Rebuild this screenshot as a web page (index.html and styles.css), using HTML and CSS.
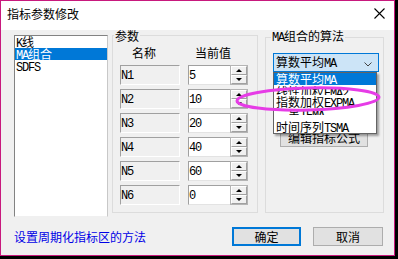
FILE: index.html
```html
<!DOCTYPE html>
<html>
<head>
<meta charset="utf-8">
<title>指标参数修改</title>
<link rel="stylesheet" href="styles.css">
</head>
<body>
<div class="win">
  <div class="titlebar">
    <span class="title">指标参数修改</span>
    <svg class="close" width="11" height="11" viewBox="0 0 11 11"><path d="M0.5 0.5L10.5 10.5M10.5 0.5L0.5 10.5" stroke="#000" stroke-width="1.1" fill="none"/></svg>
  </div>
  <div class="client">
    <div class="main">
      <ul class="listbox">
        <li><span class="l">K</span>线</li>
        <li class="sel"><span class="l">MA</span>组合</li>
        <li><span class="l">SDFS</span></li>
      </ul>
      <fieldset class="group params">
        <legend>参数</legend>
        <div class="hdr"><span class="h-name">名称</span><span class="h-val">当前值</span></div>
        <div class="rows">
          <div class="row"><div class="name"><span class="l">N1</span></div><div class="val"><span class="l">5</span></div><div class="spin"><span class="up"><i></i></span><span class="dn"><i></i></span></div></div>
          <div class="row"><div class="name"><span class="l">N2</span></div><div class="val"><span class="l">10</span></div><div class="spin"><span class="up"><i></i></span><span class="dn"><i></i></span></div></div>
          <div class="row"><div class="name"><span class="l">N3</span></div><div class="val"><span class="l">20</span></div><div class="spin"><span class="up"><i></i></span><span class="dn"><i></i></span></div></div>
          <div class="row"><div class="name"><span class="l">N4</span></div><div class="val"><span class="l">40</span></div><div class="spin"><span class="up"><i></i></span><span class="dn"><i></i></span></div></div>
          <div class="row"><div class="name"><span class="l">N5</span></div><div class="val"><span class="l">60</span></div><div class="spin"><span class="up"><i></i></span><span class="dn"><i></i></span></div></div>
          <div class="row"><div class="name"><span class="l">N6</span></div><div class="val"><span class="l">0</span></div><div class="spin"><span class="up"><i></i></span><span class="dn"><i></i></span></div></div>
        </div>
      </fieldset>
      <fieldset class="group algo">
        <legend><span class="l">MA</span>组合的算法</legend>
        <div class="combo">
          <span class="combo-text">算数平均<span class="l">MA</span></span>
          <svg class="chev" width="8" height="5" viewBox="0 0 8 5"><path d="M0.5 0.5L4 4L7.5 0.5" stroke="#444" stroke-width="1" fill="none"/></svg>
          <ul class="dropdown">
            <li class="d1 hl">算数平均<span class="l">MA</span></li>
            <li class="d2">线性加权<span class="l">EMA2</span></li>
            <li class="d3">指数加权<span class="l">EXPMA</span></li>
            <li class="d4">吊<span class="l">TEMA</span></li>
            <li class="d5">时间序列<span class="l">TSMA</span></li>
          </ul>
        </div>
        <button class="btn edit">编辑指标公式</button>
      </fieldset>
    </div>
    <div class="footer">
      <a class="link">设置周期化指标区的方法</a>
      <button class="btn ok">确定</button>
      <button class="btn cancel">取消</button>
    </div>
  </div>
  <svg class="mark" width="152" height="32" viewBox="0 0 152 32"><ellipse cx="74" cy="15" rx="71" ry="11" transform="rotate(-1.5 74 15)" fill="none" stroke="#e63ce6" stroke-width="3"/></svg>
</div>
</body>
</html>
```

FILE: styles.css
```css
* { box-sizing: border-box; }
html, body { margin: 0; padding: 0; }
body {
  background: #000;
  width: 398px;
  height: 259px;
  overflow: hidden;
  font: 12px/12px "Noto Sans CJK SC", "Noto Sans", sans-serif;
  color: #000;
}
.l {
  font-family: "Liberation Mono", "Noto Sans CJK SC", monospace;
  letter-spacing: -1.2px;
}
.win {
  position: relative;
  width: 395px;
  height: 256px;
  border: 1px solid #c8197d;
  background: #f0f0f0;
  display: flex;
  flex-direction: column;
}
.titlebar {
  height: 29px;
  background: #fff;
  display: flex;
  align-items: flex-start;
  padding: 7px 9px 0 6px;
}
.title { line-height: 12px; }
.close { margin-left: auto; margin-top: 0; display: block; }
.client {
  flex: 1;
  display: flex;
  flex-direction: column;
}
.main {
  display: flex;
  align-items: flex-start;
  padding-left: 13px;
}
.listbox {
  list-style: none;
  margin: 5px 0 0 0;
  padding: 0;
  width: 94px;
  height: 182px;
  background: #fff;
  border: 1px solid #828282;
  border-right-color: #c8c8c8;
  border-bottom-color: #f0f0f0;
}
.listbox li {
  height: 12px;
  line-height: 12px;
  padding-left: 1px;
  white-space: nowrap;
}
.listbox li.sel { background: #0078d7; color: #fff; }

.group {
  margin: 0;
  padding: 0;
  min-width: 0;
  border: 1px solid #dcdcdc;
  height: 183px;
}
.group legend {
  line-height: 11px;
  font-size: 12px;
  padding: 0 1px;
}
.params { margin-left: 4px; width: 146px; }
.params legend { margin-left: 1px; }
.algo { margin-left: 7px; width: 119px; }
.algo legend { margin-left: 5px; }

.hdr {
  margin-top: 6px;
  padding-left: 19px;
  height: 12px;
  line-height: 12px;
  display: flex;
}
.h-val { margin-left: 39px; }
.rows {
  margin-top: 6px;
  padding-left: 7px;
  display: flex;
  flex-direction: column;
  gap: 4px;
}
.row { display: flex; height: 20px; }
.name {
  width: 60px;
  height: 20px;
  border: 1px solid;
  border-color: #a0a0a0 #fff #fff #a0a0a0;
  padding-top: 2px;
  line-height: 12px;
  margin-right: 8px;
}
.val {
  width: 42px;
  height: 20px;
  background: #fff;
  border: 1px solid #a0a0a0;
  border-right: none;
  border-bottom-color: #e3e3e3;
  padding-top: 2px;
  line-height: 12px;
}
.spin {
  width: 18px;
  height: 20px;
  border: 1px solid #b4b4b4;
  display: flex;
  flex-direction: column;
}
.spin span {
  flex: 1;
  display: flex;
  align-items: center;
  justify-content: center;
  background: #f0f0f0;
  border: 1px solid;
  border-color: #fff #a0a0a0 #a0a0a0 #fff;
}
.spin i {
  width: 0; height: 0;
  border-left: 3px solid transparent;
  border-right: 3px solid transparent;
}
.spin .up i { border-bottom: 3px solid #000; }
.spin .dn i { border-top: 3px solid #000; }

.combo {
  position: relative;
  margin: 9px 0 0 7px;
  width: 106px;
  height: 19px;
  background: #cce4f7;
  border: 1px solid #0078d7;
  display: flex;
  align-items: center;
  padding: 1px 6px 0 2px;
}
.combo-text { line-height: 12px; }
.chev { margin-left: auto; display: block; margin-top: 2px; }
.dropdown {
  position: absolute;
  top: 18px;
  left: -1px;
  width: 104px;
  margin: 0;
  padding: 0;
  list-style: none;
  background: #fff;
  border: 1px solid #646464;
  box-shadow: 2px 2px 2px rgba(0,0,0,0.35);
  z-index: 2;
}
.dropdown li {
  padding-left: 2px;
  line-height: 12px;
  white-space: nowrap;
  overflow: hidden;
}
.dropdown .d1 { height: 12px; }
.dropdown .d1.hl { background: #0078d7; color: #fff; }
.dropdown .d2 { height: 10px; padding-top: 1px; }
.dropdown .d3 { height: 13px; padding-top: 1px; }
.dropdown .d4 { height: 12px; padding-left: 14px; }
.dropdown .d4 { clip-path: inset(0 0 5px 0); }
.dropdown .d5 { height: 13px; padding-top: 1px; }

.btn {
  font: 12px/12px "Noto Sans CJK SC", sans-serif;
  color: #000;
  background: #e1e1e1;
  border: 1px solid #adadad;
  padding: 0;
  height: 19px;
  margin: 0;
}
.edit {
  display: block;
  margin: 56px 0 0 14px;
  width: 88px;
}
.footer {
  margin-top: 10px;
  display: flex;
  align-items: center;
  padding: 0 11px 0 13px;
}
.link {
  flex: 1;
  color: #0000e6;
  line-height: 12px;
}
.ok {
  width: 69px;
  margin-right: 12px;
  border: 2px solid #0078d7;
}
.cancel { width: 70px; }
.mark {
  position: absolute;
  left: 233px;
  top: 83px;
  z-index: 5;
  pointer-events: none;
}
```
